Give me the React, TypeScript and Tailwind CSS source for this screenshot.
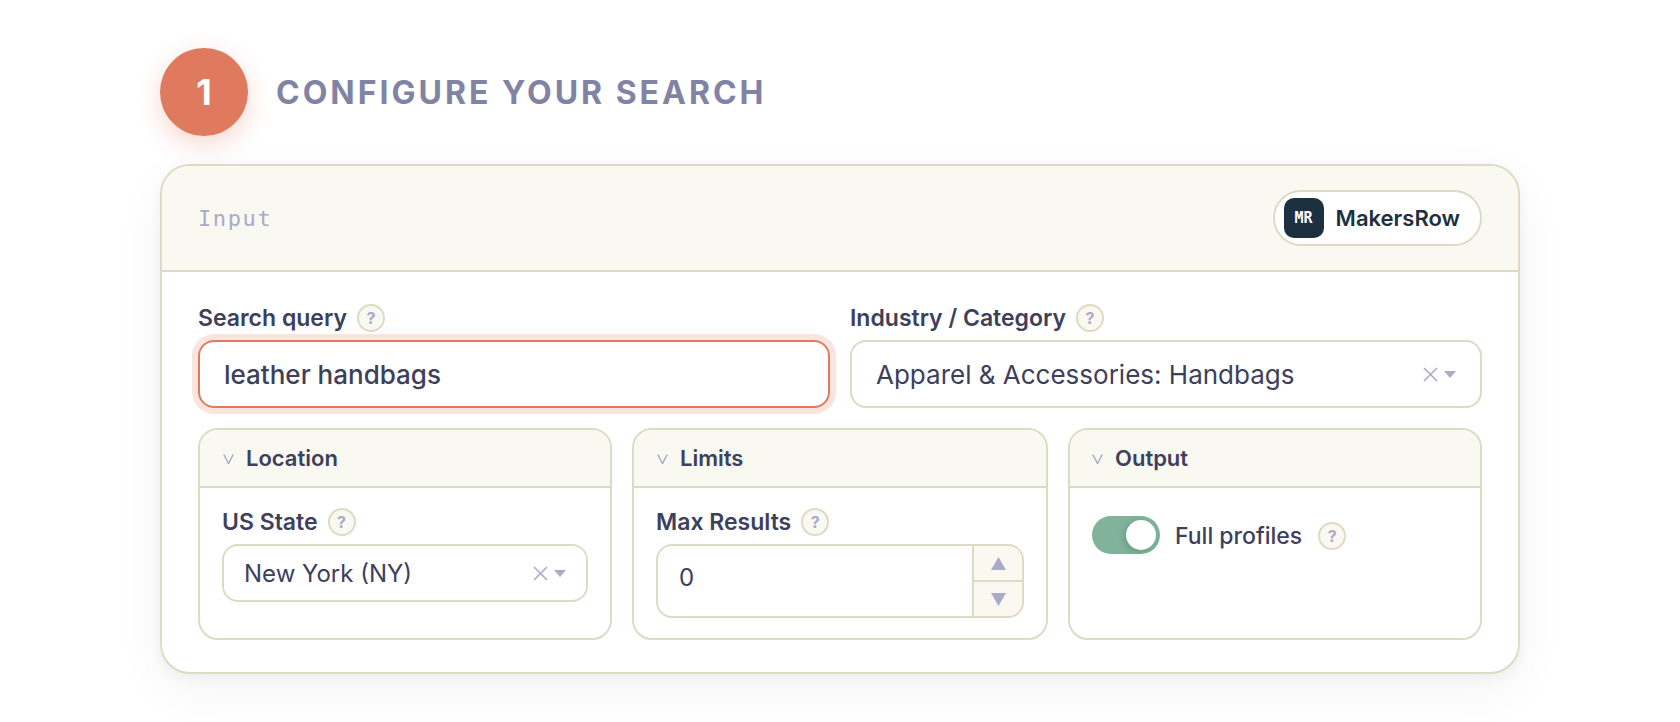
function HelpDot() {
  return (
    <span className="flex h-7 w-7 shrink-0 items-center justify-center rounded-full border-2 border-[#dfdac3] bg-[#f9f8f1] text-[16px] font-bold text-[#a9abc8]">
      ?
    </span>
  );
}

function FieldLabel({ text }: { text: string }) {
  return (
    <div className="flex h-7 items-center gap-2.5 text-[23px] font-semibold text-[#3d405b]">
      <span>{text}</span>
      <HelpDot />
    </div>
  );
}

function ClearCaret() {
  return (
    <span className="flex shrink-0 items-center gap-1.5 text-[#a9abc8]">
      <svg width="15" height="15" viewBox="0 0 15 15" fill="none" stroke="currentColor" strokeWidth="1.6">
        <path d="M1 1l13 13M14 1L1 14" />
      </svg>
      <svg width="12" height="7" viewBox="0 0 12 7" fill="currentColor">
        <path d="M0 0h12L6 7z" />
      </svg>
    </span>
  );
}

function Section({ title, headerPad, children }: { title: string; headerPad: string; children: React.ReactNode }) {
  return (
    <div className="overflow-hidden rounded-[20px] border-2 border-[#dfdac3]">
      <div className={`flex h-[58px] items-center gap-3 border-b-2 border-[#dfdac3] bg-[#f9f8f1] pt-px text-[22px] font-semibold text-[#3d405b] ${headerPad}`}>
        <svg width="11" height="10" viewBox="0 0 11 10" fill="none" stroke="#a9abc8" strokeWidth="1.5">
          <path d="M.8.5l4.7 9 4.7-9" />
        </svg>
        <span>{title}</span>
      </div>
      {children}
    </div>
  );
}

export default function App() {
  return (
    <div className="h-[722px] overflow-hidden bg-white pt-12 pl-40 font-['Inter',sans-serif]">
      <div className="w-[1360px]">
        <div className="mb-7 flex items-center gap-7">
          <div className="flex h-[88px] w-[88px] items-center justify-center rounded-full bg-[#e07a5f] text-[36px] font-bold text-white shadow-[0_8px_24px_rgba(224,122,95,0.3)]">
            1
          </div>
          <h2 className="pt-0.5 text-[32px] font-bold tracking-[3px] text-[#8183a5]">CONFIGURE YOUR SEARCH</h2>
        </div>

        <div className="overflow-hidden rounded-[30px] border-2 border-[#dfdac3] bg-white shadow-[0_4px_12px_rgba(61,64,91,0.05),0_16px_48px_rgba(61,64,91,0.06)]">
          <div className="flex h-[106px] items-center justify-between border-b-2 border-[#dfdac3] bg-[#f9f8f1] px-9">
            <span className="font-['DejaVu_Sans_Mono',monospace] text-[22px] tracking-[1.6px] text-[#a9abc8]">Input</span>
            <div className="flex h-14 items-center gap-3 rounded-full border-2 border-[#dfdac3] bg-white pr-[20px] pl-[9px]">
              <span className="flex h-10 w-10 items-center justify-center rounded-[10px] bg-[#1d3040] font-['DejaVu_Sans_Mono',monospace] text-[15px] font-bold text-white">
                MR
              </span>
              <span className="text-[22px] font-semibold text-[#1d3040]">MakersRow</span>
            </div>
          </div>

          <div className="px-9 pt-8 pb-8">
            <div className="grid grid-cols-2 gap-5">
              <div>
                <FieldLabel text="Search query" />
                <div className="mt-2 flex h-[68px] items-center rounded-2xl border-2 border-[#e07a5f] px-6 text-[26px] font-medium text-[#3d405b] shadow-[0_0_0_6px_#f9e4de]">
                  leather handbags
                </div>
              </div>
              <div>
                <FieldLabel text="Industry / Category" />
                <div className="mt-2 flex h-[68px] items-center justify-between rounded-2xl border-2 border-[#dfdac3] pr-[24px] pl-6 text-[26px] text-[#3d405b]">
                  <span>Apparel &amp; Accessories: Handbags</span>
                  <ClearCaret />
                </div>
              </div>
            </div>

            <div className="mt-5 grid grid-cols-[414px_1fr_414px] gap-5">
              <Section title="Location" headerPad="px-[23px]">
                <div className="px-[22px] pt-5 pb-5">
                  <FieldLabel text="US State" />
                  <div className="mt-2 flex h-[58px] items-center justify-between rounded-2xl border-2 border-[#dfdac3] pr-[20px] pl-5 text-[24px] text-[#3d405b]">
                    <span className="pt-px">New York (NY)</span>
                    <ClearCaret />
                  </div>
                </div>
              </Section>

              <Section title="Limits" headerPad="px-[23px]">
                <div className="px-[22px] pt-5 pb-5">
                  <FieldLabel text="Max Results" />
                  <div className="mt-2 flex h-[74px] overflow-hidden rounded-2xl border-2 border-[#dfdac3] text-[24px] text-[#3d405b]">
                    <div className="flex flex-1 items-center pb-1.5 pl-[21px]">0</div>
                    <div className="flex w-[50px] flex-col border-l-2 border-[#dfdac3] bg-[#f9f8f1]">
                      <div className="flex flex-1 items-center justify-center border-b-2 border-[#dfdac3]">
                        <svg width="15" height="13" viewBox="0 0 15 13" fill="#a9abc8">
                          <path d="M7.5 0L15 13H0z" />
                        </svg>
                      </div>
                      <div className="flex flex-1 items-center justify-center">
                        <svg width="15" height="13" viewBox="0 0 15 13" fill="#a9abc8">
                          <path d="M0 0h15L7.5 13z" />
                        </svg>
                      </div>
                    </div>
                  </div>
                </div>
              </Section>

              <Section title="Output" headerPad="px-[22px]">
                <div className="flex items-center px-[22px] pt-7 text-[23px] font-medium text-[#3d405b]">
                  <div className="flex h-[38px] w-[68px] items-center justify-end rounded-full bg-[#81b29a] pr-1">
                    <span className="h-[30px] w-[30px] rounded-full bg-white shadow-[-2px_2px_6px_rgba(0,0,0,0.15)]" />
                  </div>
                  <span className="ml-[15px] pt-0.5">Full profiles</span>
                  <span className="ml-4 pt-px">
                    <HelpDot />
                  </span>
                </div>
              </Section>
            </div>
          </div>
        </div>
      </div>
    </div>
  );
}
